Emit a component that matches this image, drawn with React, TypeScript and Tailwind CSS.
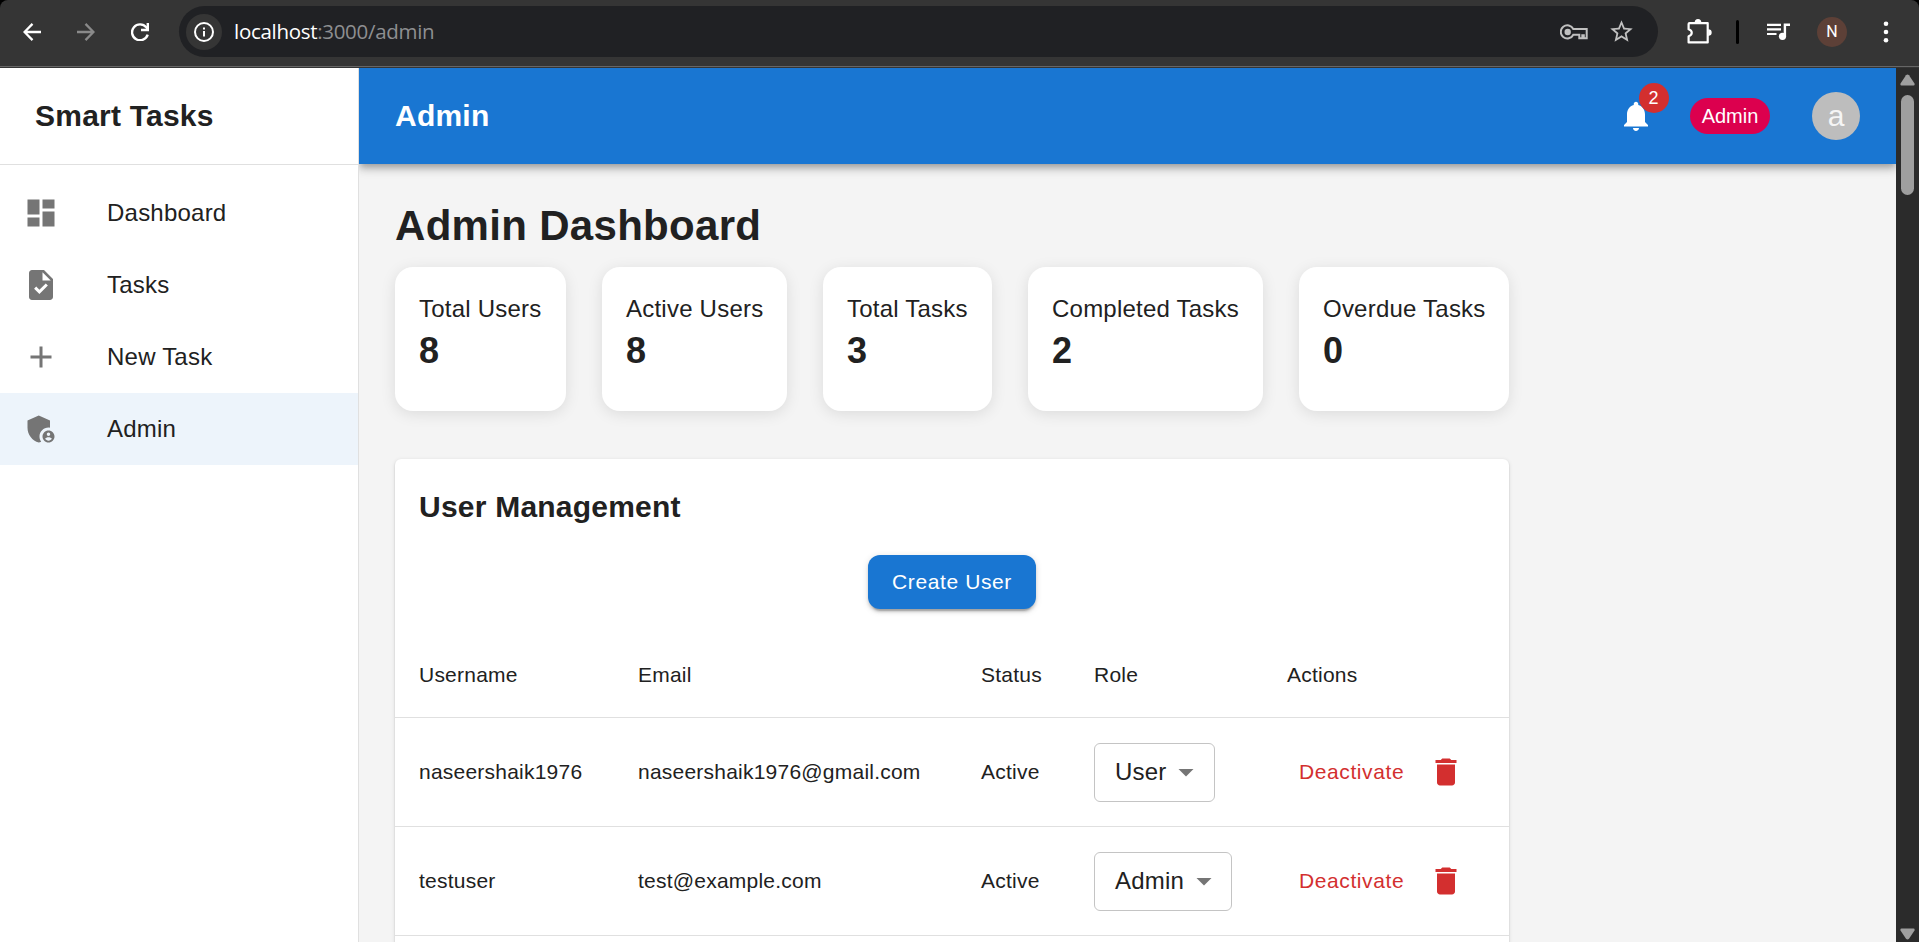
import React from "react";

const stats = [
  { label: "Total Users", value: 8, width: "w-[171px]" },
  { label: "Active Users", value: 8, width: "w-[185px]" },
  { label: "Total Tasks", value: 3, width: "w-[169px]" },
  { label: "Completed Tasks", value: 2, width: "w-[235px]" },
  { label: "Overdue Tasks", value: 0, width: "w-[210px]" },
];

const users = [
  { username: "naseershaik1976", email: "naseershaik1976@gmail.com", status: "Active", role: "User", select: "w-[121px] pr-[10px]" },
  { username: "testuser", email: "test@example.com", status: "Active", role: "Admin", select: "w-[138px] pr-[9px]" },
];

const icons = {
  dashboard: "M3 13h8V3H3v10zm0 8h8v-6H3v6zm10 0h8V11h-8v10zm0-18v6h8V3h-8z",
  task: "M14 2H6c-1.1 0-1.99.9-1.99 2L4 20c0 1.1.89 2 1.99 2H18c1.1 0 2-.9 2-2V8l-6-6zm-3.06 16L7.4 14.46l1.41-1.41 2.12 2.12 4.24-4.24 1.41 1.41L10.94 18zM13 9V3.5L18.5 9H13z",
  add: "M19 13h-6v6h-2v-6H5v-2h6V5h2v6h6v2z",
  shield:
    "M17 11c.34 0 .67.04 1 .09V6.27L10.5 3 3 6.27v4.91c0 4.54 3.2 8.79 7.5 9.82.55-.13 1.08-.32 1.6-.55-.69-.98-1.1-2.17-1.1-3.45 0-3.31 2.69-6 6-6z M17 13c-2.21 0-4 1.79-4 4s1.79 4 4 4 4-1.79 4-4-1.79-4-4-4zm0 1.38c.62 0 1.12.51 1.12 1.12s-.51 1.12-1.12 1.12-1.12-.51-1.12-1.12.5-1.12 1.12-1.12zm0 5.37c-.93 0-1.74-.46-2.24-1.17.05-.72 1.51-1.08 2.24-1.08s2.19.36 2.24 1.08c-.5.71-1.31 1.17-2.24 1.17z",
  bell: "M12 22c1.1 0 2-.9 2-2h-4c0 1.1.89 2 2 2zm6-6v-5c0-3.07-1.64-5.64-4.5-6.32V4c0-.83-.67-1.5-1.5-1.5s-1.5.67-1.5 1.5v.68C7.63 5.36 6 7.92 6 11v5l-2 2v1h16v-1l-2-2z",
  trash: "M6 19c0 1.1.9 2 2 2h8c1.1 0 2-.9 2-2V7H6v12zM19 4h-3.5l-1-1h-5l-1 1H5v2h14V4z",
  caret: "M7 10l5 5 5-5z",
  star: "M22 9.24l-7.19-.62L12 2 9.19 8.63 2 9.24l5.46 4.73L5.82 21 12 17.27 18.18 21l-1.63-7.03L22 9.24zM12 15.4l-3.76 2.27 1-4.28-3.32-2.88 4.38-.38L12 6.1l1.71 4.04 4.38.38-3.32 2.88 1 4.28L12 15.4z",
};

function Icon({ d, className }: { d: string; className: string }) {
  return (
    <svg viewBox="0 0 24 24" fill="currentColor" className={`shrink-0 ${className}`}>
      <path d={d} fillRule="evenodd" />
    </svg>
  );
}

const nav = [
  { label: "Dashboard", icon: icons.dashboard, active: false },
  { label: "Tasks", icon: icons.task, active: false },
  { label: "New Task", icon: icons.add, active: false },
  { label: "Admin", icon: icons.shield, active: true },
];

function BrowserBar() {
  return (
    <div className="flex h-[68px] shrink-0 flex-col bg-black">
      <div className="flex h-[66px] items-start rounded-t-lg bg-[#353535] text-white">
        <div className="flex h-16 w-[179px] items-center pl-[23px]">
          <svg viewBox="0 0 18 18" className="h-[18px] w-[18px]" fill="none" stroke="currentColor" strokeWidth="2.3">
            <path d="M18 9H2M9.500.9L1.500 9l8 8.100" />
          </svg>
          <svg viewBox="0 0 18 18" className="ml-9 h-[18px] w-[18px] text-[#8a8a8a]" fill="none" stroke="currentColor" strokeWidth="2.3">
            <path d="M0 9h16M8.500.9L16.500 9l-8 8.100" />
          </svg>
          <svg viewBox="0 0 18 18" className="ml-9 h-[18px] w-[18px]" fill="none" stroke="currentColor" strokeWidth="2.4">
            <path d="M16.700 11.600A8 7.900 0 1 1 15.300 4.300L17 6.500" />
            <path d="M16.800 0v7H10" />
          </svg>
        </div>
        <div className="mt-[6px] flex h-[51px] w-[1479px] items-center rounded-full bg-[#202124] pr-[23px] pl-[7px]">
          <div className="flex h-9 w-9 items-center justify-center rounded-full bg-[#353535]">
            <svg viewBox="0 0 20 20" className="h-5 w-5" fill="none" stroke="currentColor" strokeWidth="2">
              <circle cx="10" cy="10" r="9" />
              <path d="M10 9v5.5M10 5.5v2" />
            </svg>
          </div>
          <div className="-mt-[2px] ml-3 font-['Open_Sans','Noto_Sans',sans-serif] text-[20.5px] leading-7 tracking-[-0.3px] text-[#8e8f91]">
            <span className="text-white">localhost</span>:3000/admin
          </div>
          <svg viewBox="0 0 28 16" className="ml-auto h-4 w-7 text-[#c0c0c0]" fill="none" stroke="currentColor" strokeWidth="2">
            <path d="M13.300 5H26.700V14.200H23.800V11.200H22.300V14.200H19.300V10.800H13.300A6.600 6.600 0 1 1 13.300 5Z" />
            <circle cx="7.700" cy="8" r="3.200" fill="currentColor" stroke="none" />
          </svg>
          <Icon d={icons.star} className="ml-[20px] h-[27px] w-[27px] text-[#c0c0c0]" />
        </div>
        <div className="flex h-16 flex-1 items-center pl-[29px]">
          <svg viewBox="0 0 25 25" className="-mt-[2px] h-[25px] w-[25px]" fill="none" stroke="currentColor" strokeWidth="2.2" strokeLinejoin="round">
            <path d="M2.500 4.100H20.700V23.400H1.600V17.200C5.800 16 5.800 11.500 1.600 10.300V5Q1.600 4.100 2.500 4.100Z" />
            <path d="M7.700 3.500a3.300 3.500 0 0 1 6.600 0zM21.200 10.300a3.500 3.300 0 0 1 0 6.600z" fill="currentColor" stroke="none" />
          </svg>
          <div className="ml-6 h-6 w-[3px] rounded bg-black" />
          <svg viewBox="0 0 24 18" className="-mt-[1px] ml-[28px] h-[18px] w-6" fill="currentColor">
            <path d="M0 .7h14v2.200H0zM0 5.300h14v2.200H0zM0 9.900h9.500v2.200H0zM16.700.5H23v2.400h-3.900V13h-2.400z" />
            <circle cx="15.500" cy="13.300" r="3.600" />
          </svg>
          <div className="ml-[26px] flex h-[30px] w-[30px] items-center justify-center rounded-full bg-[#5d4037] font-[Roboto,sans-serif] text-base">N</div>
          <svg viewBox="0 0 6 22" className="ml-[36px] h-[22px] w-[6px]" fill="currentColor">
            <circle cx="3" cy="2.700" r="2.300" />
            <circle cx="3" cy="11" r="2.300" />
            <circle cx="3" cy="19.300" r="2.300" />
          </svg>
        </div>
      </div>
      <div className="h-px bg-[#666]" />
      <div className="h-px bg-[#353535]" />
    </div>
  );
}

function Sidebar() {
  return (
    <aside className="relative z-10 flex w-[359px] shrink-0 flex-col border-r border-[#e0e0e0] bg-white">
      <div className="flex h-[97px] shrink-0 items-center border-b border-[#e0e0e0] pb-[2px] pl-[35px] text-[30px] font-bold tracking-[0.0075em]">
        Smart Tasks
      </div>
      <nav className="flex flex-col pt-3">
        {nav.map((item) => (
          <a key={item.label} className={`flex h-[72px] items-center pl-[23px] ${item.active ? "bg-[#edf4fb]" : ""}`}>
            <Icon d={item.icon} className="h-9 w-9 text-[#757575]" />
            <span className="ml-12 text-2xl tracking-[0.00938em]">{item.label}</span>
          </a>
        ))}
      </nav>
    </aside>
  );
}

function TopBar() {
  return (
    <header className="relative flex h-24 shrink-0 items-center bg-[#1976d2] px-9 text-white shadow-[0_3px_6px_-1.5px_rgba(0,0,0,0.2),0_6px_7.5px_0_rgba(0,0,0,0.14),0_1.5px_15px_0_rgba(0,0,0,0.12)]">
      <h1 className="pb-[2px] text-[30px] font-bold tracking-[0.0075em]">Admin</h1>
      <div className="relative ml-auto h-9 w-9">
        <Icon d={icons.bell} className="h-9 w-9" />
        <span className="absolute -top-[15px] left-[21px] flex h-[30px] w-[30px] items-center justify-center rounded-full bg-[#d32f2f] pr-[1px] text-lg leading-none">
          2
        </span>
      </div>
      <span className="ml-9 flex h-9 w-20 items-center justify-center rounded-full bg-[#dc004e] pb-px text-[20px]">Admin</span>
      <span className="ml-[42px] flex h-12 w-12 items-center justify-center rounded-full bg-[#bdbdbd] text-[30px] leading-none text-[#f5f5f5]">a</span>
    </header>
  );
}

function UserManagement() {
  const row = "grid grid-cols-[219px_343px_113px_193px_1fr] items-center border-b border-[#e0e0e0]";
  return (
    <section className="mt-12 flex w-[1114px] flex-col rounded-md bg-white pt-6 shadow-[0_3px_1.5px_-1.5px_rgba(0,0,0,0.2),0_1.5px_1.5px_0_rgba(0,0,0,0.14),0_1.5px_4.5px_0_rgba(0,0,0,0.12)]">
      <h3 className="pl-6 text-[30px] leading-[48px] font-bold tracking-[0.0075em]">User Management</h3>
      <button className="mt-6 h-[54px] w-[168px] self-center rounded-xl bg-[#1976d2] text-[21px] tracking-[0.02857em] text-white shadow-[0_4.5px_1.5px_-3px_rgba(0,0,0,0.2),0_3px_3px_0_rgba(0,0,0,0.14),0_1.5px_7.5px_0_rgba(0,0,0,0.12)]">
        Create User
      </button>
      <div className="mt-6 text-[21px] tracking-[0.01071em]">
        <div className={`${row} h-[85px]`}>
          <div className="pl-6">Username</div>
          <div className="pl-6">Email</div>
          <div className="pl-6">Status</div>
          <div className="pl-6">Role</div>
          <div className="pl-6">Actions</div>
        </div>
        {users.map((u) => (
          <div key={u.username} className={`${row} h-[109px]`}>
            <div className="pl-6">{u.username}</div>
            <div className="pl-6">{u.email}</div>
            <div className="pl-6">{u.status}</div>
            <div className="pl-6">
              <div className={`flex h-[59px] items-center justify-between rounded-md border border-[#c4c4c4] pl-5 text-2xl tracking-[0.00938em] ${u.select}`}>
                {u.role}
                <Icon d={icons.caret} className="h-9 w-9 text-[#757575]" />
              </div>
            </div>
            <div className="flex items-center pl-9 text-[#d32f2f]">
              <span className="w-[129px] tracking-[0.02857em]">Deactivate</span>
              <Icon d={icons.trash} className="h-9 w-9" />
            </div>
          </div>
        ))}
        <div className="h-[109px]" />
      </div>
    </section>
  );
}

function Scrollbar() {
  const arrow = "M6 1.2Q7.500-.3 9 1.2L14.500 9.500Q15 11.500 13.500 11.500H1.500Q0 11.500.5 9.500Z";
  return (
    <div className="flex w-[23px] shrink-0 flex-col items-center bg-[#2b2b2b] text-[#9f9f9f]">
      <svg viewBox="0 0 15 12" className="mt-[6px] h-3 w-[15px]" fill="currentColor">
        <path d={arrow} />
      </svg>
      <div className="mt-[9px] h-[100px] w-[13px] rounded-full bg-[#9f9f9f]" />
      <svg viewBox="0 0 15 12" className="mt-auto mb-[2px] h-3 w-[15px] rotate-180" fill="currentColor">
        <path d={arrow} />
      </svg>
    </div>
  );
}

export default function App() {
  return (
    <div className="flex h-[942px] w-[1919px] flex-col overflow-hidden bg-[#f4f4f4] font-['Liberation_Sans',Arial,sans-serif] text-[#212121]">
      <BrowserBar />
      <div className="flex min-h-0 flex-1">
        <Sidebar />
        <div className="flex min-w-0 flex-1 flex-col overflow-hidden">
          <TopBar />
          <main className="min-h-0 flex-1 pt-9 pl-9">
            <h2 className="text-[42px] leading-[52px] font-bold tracking-[0.00735em]">Admin Dashboard</h2>
            <div className="mt-[15px] flex gap-9">
              {stats.map((s) => (
                <div key={s.label} className={`h-36 rounded-[18px] bg-white pt-6 pl-6 whitespace-nowrap shadow-[0_3px_15px_rgba(0,0,0,0.1)] ${s.width}`}>
                  <div className="text-2xl leading-9 tracking-[0.00938em]">{s.label}</div>
                  <div className="text-4xl leading-[48px] font-bold">{s.value}</div>
                </div>
              ))}
            </div>
            <UserManagement />
          </main>
        </div>
        <Scrollbar />
      </div>
    </div>
  );
}
